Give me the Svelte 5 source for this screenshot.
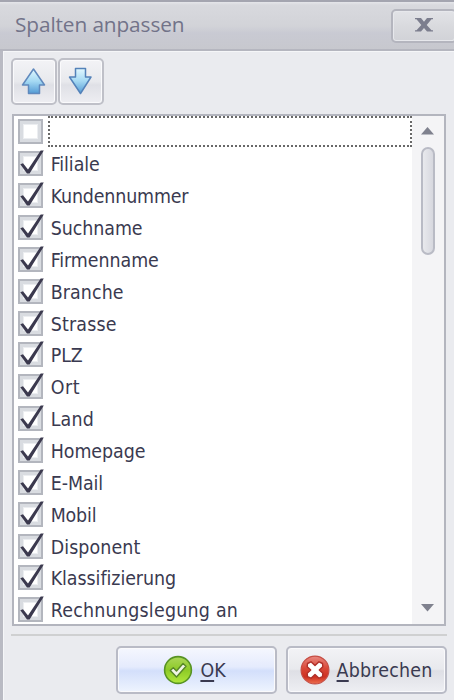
<script lang="ts">
  type Column = { label: string; visible: boolean; tracking?: number };

  let columns: Column[] = $state([
    { label: '', visible: false },
    { label: 'Filiale', visible: true },
    { label: 'Kundennummer', visible: true, tracking: -0.15 },
    { label: 'Suchname', visible: true },
    { label: 'Firmenname', visible: true },
    { label: 'Branche', visible: true, tracking: 0.1 },
    { label: 'Strasse', visible: true, tracking: 0.2 },
    { label: 'PLZ', visible: true },
    { label: 'Ort', visible: true, tracking: 0.6 },
    { label: 'Land', visible: true, tracking: 0.2 },
    { label: 'Homepage', visible: true },
    { label: 'E-Mail', visible: true },
    { label: 'Mobil', visible: true, tracking: -0.15 },
    { label: 'Disponent', visible: true, tracking: 0.1 },
    { label: 'Klassifizierung', visible: true, tracking: -0.05 },
    { label: 'Rechnungslegung an', visible: true, tracking: 0.24 }
  ]);
  let selected = $state(0);
</script>

<svg class="defs" width="0" height="0" aria-hidden="true">
  <defs>
    <linearGradient id="blue" x1="0" y1="0" x2="0" y2="1">
      <stop offset="0" stop-color="#e2f8ff" />
      <stop offset="0.5" stop-color="#a5d9f3" />
      <stop offset="1" stop-color="#539bd5" />
    </linearGradient>
    <linearGradient id="green" x1="0" y1="0" x2="0" y2="1">
      <stop offset="0" stop-color="#acd75b" />
      <stop offset="0.5" stop-color="#8dca27" />
      <stop offset="1" stop-color="#b0e83c" />
    </linearGradient>
    <linearGradient id="red" x1="0" y1="0" x2="0" y2="1">
      <stop offset="0" stop-color="#e98880" />
      <stop offset="0.45" stop-color="#d94737" />
      <stop offset="0.75" stop-color="#cf3020" />
      <stop offset="1" stop-color="#ed7050" />
    </linearGradient>
  </defs>
</svg>

<div class="dialog">
  <header>
    <h1>Spalten anpassen</h1>
    <button class="close" aria-label="Schließen">
      <svg width="20" height="14" viewBox="0 0 20 14">
        <path d="M1 0h6l3 3.700L13 0h6v1.300h-1.500L12.700 7l4.800 5.200H19v1.300h-6l-3-3.600-3 3.600H1v-1.300h1.500L7.300 7 2.500 1.300H1z" fill="#7c7e8e" />
      </svg>
    </button>
  </header>

  <div class="body">
    <div class="toolbar">
      <button class="tool" aria-label="Nach oben">
        <svg width="26" height="30" viewBox="0 0 26 30">
          <path d="M12.500 2 23.500 18h-5v8.500h-11V18h-6z" fill="url(#blue)" stroke="#6089bd" stroke-width="1.500" stroke-linejoin="round" />
        </svg>
      </button>
      <button class="tool" aria-label="Nach unten">
        <svg width="26" height="30" viewBox="0 0 26 30">
          <path d="M7.500 1.500h10V10h5.500L12.500 26.500 1.500 10h6z" fill="url(#blue)" stroke="#5482b9" stroke-width="1.500" stroke-linejoin="round" />
        </svg>
      </button>
    </div>

    <div class="list">
      <ul>
        {#each columns as col, i (i)}
          <li>
            <button
              class="check"
              role="checkbox"
              aria-checked={col.visible}
              aria-label={col.label || 'Spalte'}
              onclick={() => (col.visible = !col.visible)}
            >
              {#if col.visible}
                <svg width="27" height="28" viewBox="0 0 27 28">
                  <path d="M2.300 15.200 5 14.200 10 20.500 22.700 1.600 25.800 1.400 11.600 24.500H9z" fill="#3b394e" />
                </svg>
              {/if}
            </button>
            <!-- svelte-ignore a11y_click_events_have_key_events, a11y_no_static_element_interactions -->
            <span
              class="label"
              class:focused={selected === i}
              style="letter-spacing: {col.tracking ?? -0.05}px"
              onclick={() => (selected = i)}
            >{col.label}</span>
          </li>
        {/each}
      </ul>
      <div class="scrollbar">
        <svg width="13" height="8" viewBox="0 0 13 8"><path d="M6.500 0 13 7.500H0z" fill="#7f818e" /></svg>
        <div class="thumb"></div>
        <svg class="down" width="13" height="8" viewBox="0 0 13 8"><path d="M0 0h13L6.500 7.500z" fill="#7f818e" /></svg>
      </div>
    </div>

    <footer>
      <button class="action primary">
        <svg width="30" height="30" viewBox="0 0 30 30">
          <circle cx="15" cy="15" r="13.400" fill="url(#green)" stroke="#579324" stroke-width="1.600" />
          <path d="m7.300 15.500 3-2.800 3.200 3.300 6.500-7.500 3 2.700-9.500 10.800z" fill="#f0f5e5" stroke="#568727" stroke-width="1.400" stroke-linejoin="round" />
        </svg>
        <span><u>O</u>K</span>
      </button>
      <button class="action">
        <svg width="30" height="30" viewBox="0 0 30 30">
          <circle cx="15" cy="15" r="13.900" fill="url(#red)" stroke="#c54d44" stroke-width="1.200" />
          <path d="M7.500 8.500 11 6.800l4 3.700 4-3.700 3.500 1.700.3 3.200-3.500 3.300 3.500 3.300-.3 3.400-3.500 1.500-4-3.700-4 3.700-3.500-1.500-.3-3.400 3.500-3.300-3.500-3.300z" fill="#fff" stroke="#b03029" stroke-width="1.400" stroke-linejoin="round" />
        </svg>
        <span><u>A</u>bbrechen</span>
      </button>
    </footer>
  </div>
</div>

<style>
  :global(body) {
    margin: 0;
    overflow: hidden;
  }
  .defs {
    display: block;
  }
  .dialog {
    display: flex;
    flex-direction: column;
    box-sizing: border-box;
    width: 454px;
    height: 700px;
    overflow: hidden;
    background: #eaebef;
    font-family: 'DejaVu Sans Condensed', 'DejaVu Sans', sans-serif;
    font-stretch: condensed;
    font-size: 19.4px;
    color: #3a3a50;
  }
  button {
    box-sizing: border-box;
    padding: 0;
    font: inherit;
    color: inherit;
  }
  svg {
    display: block;
    flex: none;
  }
  header {
    display: flex;
    align-items: flex-start;
    justify-content: space-between;
    box-sizing: border-box;
    height: 51px;
    padding-left: 15px;
    border-top: 2px solid #a4a5b0;
    border-bottom: 2px solid #b5b6bf;
    background: linear-gradient(#e5e6ea 0, #d8d9de 3px, #d2d3d8 24px, #c9cad3 31px, #c7c8ce);
  }
  h1 {
    margin: 8px 0 0;
    font-family: 'Open Sans', 'Noto Sans', sans-serif;
    font-stretch: normal;
    font-size: 20.8px;
    font-weight: 400;
    line-height: 28px;
    letter-spacing: -0.1px;
    color: #727389;
  }
  .close {
    display: flex;
    justify-content: center;
    width: 66px;
    height: 34px;
    margin: 7px -3px 0 0;
    padding-top: 7px;
    border: 2px solid #b4b5be;
    border-radius: 5px;
    background: linear-gradient(#e2e3e7, #d9dade 50%, #d1d2d7);
    box-shadow: inset 0 0 0 1px #e7e8ec;
  }
  .body {
    display: flex;
    flex: 1;
    flex-direction: column;
    box-sizing: border-box;
    padding: 7px 7px 0 8px;
    border-left: 3px solid #b9bac3;
    box-shadow: inset 1px 1px #f5f6f8;
  }
  .toolbar {
    display: flex;
    gap: 1px;
  }
  .tool {
    display: flex;
    align-items: center;
    justify-content: center;
    width: 46px;
    height: 47px;
    border: 2px solid #bfc0c8;
    border-radius: 5px;
    background: linear-gradient(#f3f3f6, #e8e9ed 50%, #dfe0e6 58%, #eeeef2);
    box-shadow: inset 0 0 0 1px #fafafc;
  }
  .list {
    display: flex;
    box-sizing: border-box;
    width: 434px;
    height: 512px;
    margin: 9px 0 0 1px;
    border: 2px solid #b3b5be;
    background: #fff;
    overflow: hidden;
  }
  ul {
    flex: 1;
    margin: 0;
    padding: 0 0 0 4px;
    list-style: none;
  }
  li {
    display: flex;
    align-items: center;
    height: 31.860px;
  }
  .check {
    position: relative;
    width: 25px;
    height: 25px;
    border: 2px solid #b3b6be;
    background: #fff;
    box-shadow: inset 0 0 0 3px #d9dce1, inset 0 0 0 4px #eceef1;
  }
  .check svg {
    position: absolute;
    top: -4px;
    left: -2px;
  }
  .label {
    box-sizing: border-box;
    flex: 1;
    height: 31px;
    margin-left: 5px;
    padding-left: 0.7px;
    border: 2px solid transparent;
    line-height: 30px;
    white-space: nowrap;
  }
  .focused {
    border: 2px dotted #686868;
  }
  .scrollbar {
    display: flex;
    flex-direction: column;
    align-items: center;
    box-sizing: border-box;
    width: 32px;
    padding: 11px 1px 12px 0;
    background: #f4f4f6;
  }
  .thumb {
    box-sizing: border-box;
    width: 14px;
    height: 108px;
    margin-top: 12px;
    border: 2px solid #b9bbc5;
    border-radius: 7px;
    background: linear-gradient(90deg, #e8e9ed, #d7d8df);
  }
  .down {
    margin-top: auto;
  }
  footer {
    display: flex;
    justify-content: flex-end;
    gap: 9px;
    margin-top: 8px;
    padding-top: 10px;
    border-top: 2px solid #cfd0d1;
  }
  .action {
    display: flex;
    align-items: center;
    justify-content: center;
    gap: 7px;
    width: 161px;
    height: 48px;
    padding-right: 1px;
    border: 2px solid #b9bbc6;
    border-radius: 5px;
    background: linear-gradient(#f3f3f6, #e8e9ed 48%, #dedfe5 52%, #eeeff3);
    box-shadow: inset 0 0 0 1px #fafafc;
    letter-spacing: 0.2px;
  }
  .primary {
    padding-right: 4px;
    background: linear-gradient(#f5f7fe, #e5ebfd 43%, #d3dffb 52%, #eef4fe);
    letter-spacing: 0;
  }
  u {
    text-decoration-thickness: 1.500px;
    text-underline-offset: 3px;
  }
</style>
